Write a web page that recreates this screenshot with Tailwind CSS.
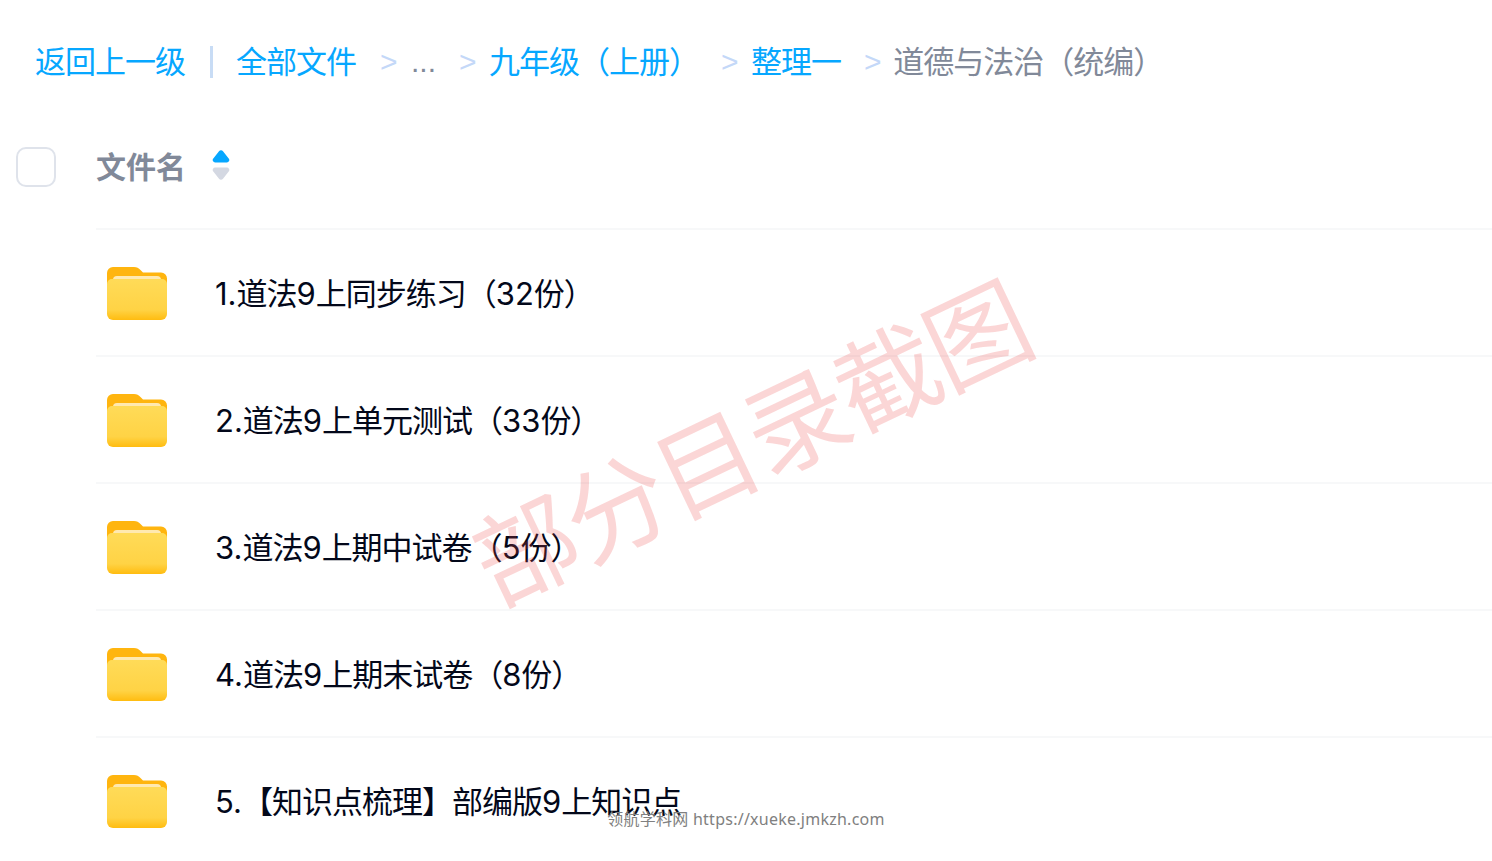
<!DOCTYPE html>
<html lang="zh-CN">
<head>
<meta charset="utf-8">
<script src="https://cdn.jsdelivr.net/npm/@tailwindcss/browser@4"></script>
<title>文件列表</title>
</head>
<body class="bg-white">
<svg width="0" height="0" class="absolute">
  <defs>
    <linearGradient id="fb" x1="0" y1="0" x2="0" y2="1"><stop offset="0" stop-color="#ffdb58"/><stop offset="0.75" stop-color="#ffd345"/><stop offset="1" stop-color="#ffbc10"/></linearGradient>
    <symbol id="folder" viewBox="0 0 60 53">
      <path d="M0 6a6 6 0 0 1 6-6h21c3 0 4.500 1 6.500 3l2.500 2.500h18a6 6 0 0 1 6 6v10H0z" fill="#ffb50f"/>
      <path d="M6 13a4 4 0 0 1 4-4h40a4 4 0 0 1 4 4v4H6z" fill="#ffe9b0"/>
      <path d="M0 17a5 5 0 0 1 5-5h50a5 5 0 0 1 5 5v30a6 6 0 0 1-6 6H6a6 6 0 0 1-6-6z" fill="url(#fb)"/>
    </symbol>
  </defs>
</svg>
<main class="relative h-[861px] w-full overflow-hidden font-['Inter','Noto_Sans_CJK_SC',sans-serif]">
  <nav class="flex h-[124px] items-center pl-[35px] text-[31px] leading-[40px] tracking-[-1px] whitespace-nowrap">
    <a class="text-[#06a7ff]">返回上一级</a>
    <span class="ml-[25px] h-[32px] w-[3px] bg-[#c8dcf5]"></span>
    <a class="ml-[23px] text-[#06a7ff]">全部文件</a>
    <span class="ml-[24px] font-['Liberation_Sans',sans-serif] text-[30px] tracking-normal text-[#c4d8f8]">&gt;</span>
    <span class="ml-[13.500px] font-['Liberation_Sans',sans-serif] text-[30px] tracking-normal text-[#818999]">...</span>
    <span class="ml-[23px] font-['Liberation_Sans',sans-serif] text-[30px] tracking-normal text-[#c4d8f8]">&gt;</span>
    <a class="ml-[12.500px] text-[#06a7ff]">九年级（上册）</a>
    <span class="ml-[22px] font-['Liberation_Sans',sans-serif] text-[30px] tracking-normal text-[#c4d8f8]">&gt;</span>
    <a class="ml-[12.500px] text-[#06a7ff]">整理一</a>
    <span class="ml-[23px] font-['Liberation_Sans',sans-serif] text-[30px] tracking-normal text-[#c4d8f8]">&gt;</span>
    <span class="ml-[11.500px] text-[#818999]">道德与法治（统编）</span>
  </nav>
  <header class="mb-[19px] flex h-[85px] items-center pl-4">
    <span class="h-10 w-10 rounded-[10px] border-2 border-[#dfe3eb] bg-white"></span>
    <span class="ml-[40px] text-[30px] font-bold leading-[40px] text-[#818999]">文件名</span>
    <svg class="mb-[3px] ml-[25px]" width="20" height="30" viewBox="0 0 20 30" aria-hidden="true">
      <path d="M8 1.200a2.600 2.600 0 0 1 4 0l5.500 7A2.500 2.500 0 0 1 15.500 12.500H4.500A2.500 2.500 0 0 1 2.500 8.200z" fill="#06a7ff"/>
      <path d="M8 28.800a2.600 2.600 0 0 0 4 0l5.500-7A2.500 2.500 0 0 0 15.500 17.500H4.500A2.500 2.500 0 0 0 2.500 21.800z" fill="#d4d8e2"/>
    </svg>
  </header>
  <ul class="ml-24 border-t-2 border-[#f7f8f9] text-[31px] leading-[40px] tracking-[-1px] text-[#03081a] whitespace-nowrap">
    <li class="flex h-[127px] items-center border-b-2 border-[#f7f8f9] pl-[11px]">
      <svg class="mt-[2px] h-[53px] w-[60px] shrink-0" aria-hidden="true"><use href="#folder"/></svg>
      <span class="ml-[48px] mt-[2px]"><span class="tracking-normal">1.</span>道法<span class="tracking-normal">9</span>上同步练习（<span class="tracking-normal">32</span>份）</span>
    </li>
    <li class="flex h-[127px] items-center border-b-2 border-[#f7f8f9] pl-[11px]">
      <svg class="mt-[2px] h-[53px] w-[60px] shrink-0" aria-hidden="true"><use href="#folder"/></svg>
      <span class="ml-[48px] mt-[2px]"><span class="tracking-normal">2.</span>道法<span class="tracking-normal">9</span>上单元测试（<span class="tracking-normal">33</span>份）</span>
    </li>
    <li class="flex h-[127px] items-center border-b-2 border-[#f7f8f9] pl-[11px]">
      <svg class="mt-[2px] h-[53px] w-[60px] shrink-0" aria-hidden="true"><use href="#folder"/></svg>
      <span class="ml-[48px] mt-[2px]"><span class="tracking-normal">3.</span>道法<span class="tracking-normal">9</span>上期中试卷（<span class="tracking-normal">5</span>份）</span>
    </li>
    <li class="flex h-[127px] items-center border-b-2 border-[#f7f8f9] pl-[11px]">
      <svg class="mt-[2px] h-[53px] w-[60px] shrink-0" aria-hidden="true"><use href="#folder"/></svg>
      <span class="ml-[48px] mt-[2px]"><span class="tracking-normal">4.</span>道法<span class="tracking-normal">9</span>上期末试卷（<span class="tracking-normal">8</span>份）</span>
    </li>
    <li class="flex h-[127px] items-center border-b-2 border-[#f7f8f9] pl-[11px]">
      <svg class="mt-[2px] h-[53px] w-[60px] shrink-0" aria-hidden="true"><use href="#folder"/></svg>
      <span class="ml-[48px] mt-[2px]"><span class="tracking-normal">5.</span>【知识点梳理】部编版<span class="tracking-normal">9</span>上知识点</span>
    </li>
  </ul>
  <div class="pointer-events-none absolute left-[748px] top-[438px] -translate-x-1/2 -translate-y-1/2 -rotate-[25.500deg] whitespace-nowrap font-['Noto_Sans_CJK_SC',sans-serif] text-[103px] leading-none tracking-[-3px] text-[#ef4444]/22">部分目录截图</div>
  <div class="pointer-events-none absolute left-0 right-0 top-[808px] text-center font-['Noto_Sans','Noto_Sans_CJK_SC',sans-serif] text-[16px] leading-[22px] tracking-[0.25px] text-[#808080]">领航学科网 https://xueke.jmkzh.com</div>
</main>
</body>
</html>
